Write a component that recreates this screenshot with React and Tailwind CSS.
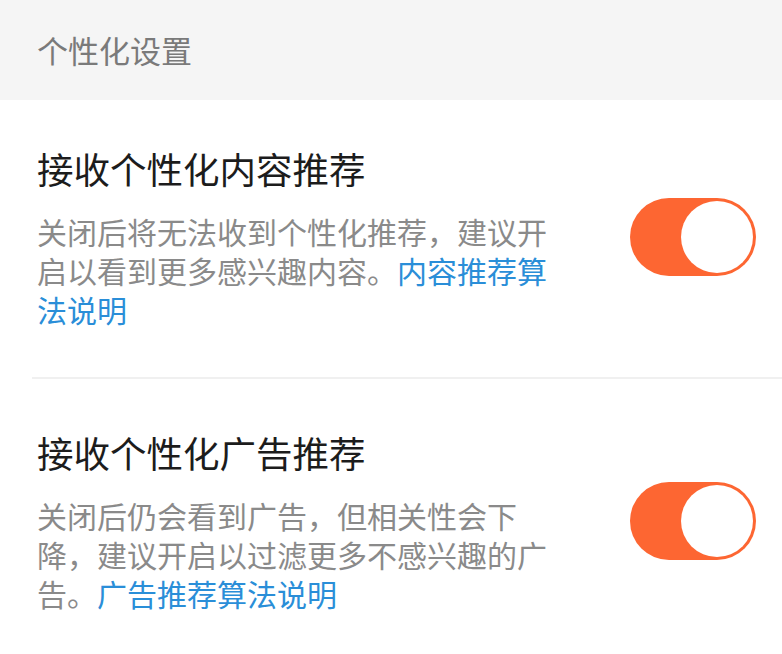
import React from "react";

const font = { fontFamily: '"Noto Sans CJK SC", "Noto Sans", sans-serif' };

function Toggle() {
  return (
    <div className="w-[126px] h-[78px] rounded-full bg-[#fd6632] p-[3px] flex justify-end shrink-0">
      <div className="w-[72px] h-[72px] rounded-full bg-white" />
    </div>
  );
}

function Row({ title, children, divider }) {
  return (
    <div className={"flex items-center justify-between pl-[37px] pr-[26px] " + (divider ? "pt-[45px] pb-[48px]" : "pt-[50px] pb-[40px]")}>
      <div className="flex flex-col gap-[19px]">
        <div className="text-[36.5px] leading-[48px] text-[#1c1c1c]">{title}</div>
        <div className="w-[520px] text-[30px] leading-[39px] text-[#8a8a8a]">{children}</div>
      </div>
      <Toggle />
    </div>
  );
}

export default function App() {
  return (
    <div className="w-[782px] h-[654px] bg-white overflow-hidden" style={font}>
      <div className="h-[100px] bg-[#f5f5f5] pl-[37px] flex items-center">
        <span className="text-[31px] text-[#7a7a7a]">个性化设置</span>
      </div>
      <Row title="接收个性化内容推荐" divider>
        关闭后将无法收到个性化推荐，建议开启以看到更多感兴趣内容。
        <span className="text-[#2a8ed8]">内容推荐算法说明</span>
      </Row>
      <div className="ml-[32px] h-[2px] bg-[#f0f0f0]" />
      <Row title="接收个性化广告推荐">
        关闭后仍会看到广告，但相关性会下降，建议开启以过滤更多不感兴趣的广告。
        <span className="text-[#2a8ed8]">广告推荐算法说明</span>
      </Row>
    </div>
  );
}
